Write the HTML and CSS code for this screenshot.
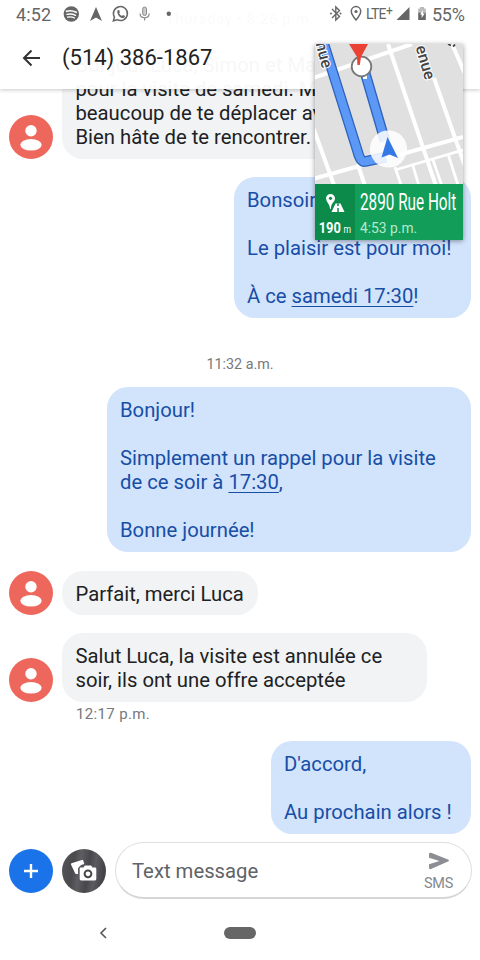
FILE: index.html
```html
<!DOCTYPE html>
<html lang="fr">
<head>
<meta charset="utf-8">
<title>Messages</title>
<link rel="stylesheet" href="styles.css">
</head>
<body>
<svg class="defs" width="0" height="0">
  <symbol id="person" viewBox="0 0 44 44">
    <circle cx="22" cy="22" r="22" fill="#ee675c"/>
    <circle cx="22" cy="15.8" r="5.7" fill="#fff"/>
    <ellipse cx="22" cy="29.8" rx="10.7" ry="5.8" fill="#fff"/>
  </symbol>
</svg>
<div class="screen">
  <header class="top">
    <div class="status">
      <span class="clock">4:52</span>
      <svg class="status-left" width="112" height="28" viewBox="60 0 112 28">
        <circle cx="71.300" cy="14" r="7.700" fill="#666"/>
        <g fill="none" stroke="#fff" stroke-linecap="round"><path stroke-width="1.700" d="M66.500 11.300q5-1.500 9.700 1"/><path stroke-width="1.400" d="M67 14.400q4.500-1.200 8.500.9"/><path stroke-width="1.200" d="M67.500 17.200q4-.9 7 .8"/></g>
        <path d="M96 7l6 14-6-3.400L90 21z" fill="#666"/>
        <path d="M113.400 20.800l1-3.700a7 7 0 1 1 2.700 2.600z" fill="none" stroke="#666" stroke-width="1.500"/>
        <path d="M117.500 10.200l1.600-.2.800 2.200-.8 1q1 2 2.900 2.700l1-1 2 1q0 2-2 2.200c-3 0-6.500-4-5.500-7.900z" fill="#666"/>
        <rect x="142.700" y="7" width="3.800" height="8.500" rx="1.900" fill="#ccc" stroke="#888"/>
        <path d="M140 13.500q.3 4.300 4.600 4.300t4.600-4.300M144.600 17.800v2.700" fill="none" stroke="#888" stroke-width="1.200"/>
        <circle cx="168.800" cy="13.700" r="2.200" fill="#666"/>
      </svg>
      <svg class="status-mid" width="36" height="28" viewBox="328 0 36 28">
        <path d="M332 9l7.500 7.500-3.700 3.500V7l3.700 3.500L332 18" fill="none" stroke="#666" stroke-width="1.400"/>
        <circle cx="331" cy="13.500" r="1" fill="#666"/><circle cx="340.500" cy="13.500" r="1" fill="#666"/>
        <path d="M356 20q-4.700-5.400-4.700-8.700a4.700 4.700 0 0 1 9.400 0q0 3.300-4.700 8.700z" fill="none" stroke="#666" stroke-width="1.500"/>
        <circle cx="356" cy="11.500" r="1.600" fill="#666"/>
      </svg>
      <span class="lte">LTE<sup>+</sup></span>
      <svg class="status-right" width="34" height="28" viewBox="394 0 34 28">
        <path d="M409.500 7v13h-13z" fill="#666"/>
        <path d="M420 7h4v1.500h1.800v4H418.200v-4H420z" fill="#bbb"/>
        <path d="M418.200 12.500h7.600V20h-7.600z" fill="#666"/>
        <path d="M423 10l-3 4.400h1.700V18l3-4.500H423z" fill="#fff"/>
      </svg>
      <span class="battery">55%</span>
    </div>
    <div class="bar">
      <svg width="20" height="20" viewBox="0 0 20 20"><path d="M18 10H3M9.500 2.500L2 10l7.500 7.500" fill="none" stroke="#333" stroke-width="2"/></svg>
      <h1>(514) 386-1867</h1>
    </div>
  </header>

  <main class="thread">
    <div class="day">Thursday • 8:26 p.m.</div>
    <div class="row first">
      <svg class="avatar"><use href="#person"/></svg>
      <p class="bubble in long">Bonjour Luca, Simon et Marie<br>pour la visite de samedi. Merci<br>beaucoup de te déplacer avec<br>Bien hâte de te rencontrer.</p>
    </div>
    <div class="row out-row gap-a"><p class="bubble out w237">Bonsoir,<br><br>Le plaisir est pour moi!<br><br>À ce <u>samedi 17:30</u>!</p></div>
    <div class="stamp">11:32 a.m.</div>
    <div class="row out-row"><p class="bubble out w364">Bonjour!<br><br>Simplement un rappel pour la visite<br>de ce soir à <u>17:30</u>,<br><br>Bonne journée!</p></div>
    <div class="row gap-b">
      <svg class="avatar"><use href="#person"/></svg>
      <p class="bubble in single">Parfait, merci Luca</p>
    </div>
    <div class="row gap-c">
      <svg class="avatar"><use href="#person"/></svg>
      <p class="bubble in long last">Salut Luca, la visite est annulée ce<br>soir, ils ont une offre acceptée</p>
    </div>
    <div class="sent">12:17 p.m.</div>
    <div class="row out-row"><p class="bubble out w200">D'accord,<br><br>Au prochain alors !</p></div>
  </main>

  <footer>
    <div class="compose">
      <svg width="44" height="44" viewBox="0 0 44 44"><circle cx="22" cy="22" r="22" fill="#1a73e8"/><path d="M22 15v14M15 22h14" stroke="#fff" stroke-width="2.400"/></svg>
      <svg class="camera" width="44" height="44" viewBox="0 0 44 44">
        <defs><linearGradient id="photo" x2="1" y2=".15"><stop offset="0" stop-color="#55555a"/><stop offset=".3" stop-color="#4a4a4d"/><stop offset=".45" stop-color="#5e5e62"/><stop offset=".65" stop-color="#48484c"/><stop offset=".8" stop-color="#5b5b60"/><stop offset="1" stop-color="#444448"/></linearGradient></defs>
        <circle cx="22" cy="22" r="22" fill="url(#photo)"/>
        <path d="M9.500 14.300L20 10.900q1-.2 1.300.8l1 3.300-3.300 1-2 2-1 1.500v5.500h-1.500q-1 .2-1.400-.8L9 15.500q-.2-1 .5-1.200z" fill="#fff"/>
        <path d="M19 18.500h2.500l1.300-2h6.400l1.300 2H33q1.300 0 1.300 1.300v10.300q0 1.300-1.300 1.300H19q-1.300 0-1.300-1.300V19.800q0-1.300 1.300-1.300z" fill="#fff"/>
        <circle cx="26" cy="24.800" r="3.400" fill="none" stroke="#48484b" stroke-width="2"/>
      </svg>
      <div class="field">
        <span>Text message</span>
        <div class="send">
          <svg width="22" height="18" viewBox="0 0 22 18"><path d="M1 2.200Q1 .2 3 .8l17 6.700q2 1 0 2L3 17q-2 .6-2-1.400V12.300l10.500-3.300L1 5.700z" fill="#8b8f93"/></svg>
          <span>SMS</span>
        </div>
      </div>
    </div>
    <nav>
      <svg width="10" height="14" viewBox="0 0 10 14"><path d="M7 2L2 7l5 5" fill="none" stroke="#555" stroke-width="1.600"/></svg>
      <i class="pill"></i>
    </nav>
  </footer>

  <aside class="pip">
    <svg width="148" height="140" viewBox="315 44 148 140">
      <path fill="#e0e0e0" d="M315 44h148v140H315z"/>
      <g fill="none" stroke="#fff" stroke-width="4">
        <path d="M313 78L412 44M388 44l48 142M434 78l38 108M452 44l14 32M313 127l21 58M313 179l150-42M358 165l7 21"/>
        <path stroke-width="2.800" d="M395 170l68-20M395 167l6 18M413 166l6 20M433 160l9 26M448 154l10 31"/>
      </g>
      <g fill="none" stroke-linejoin="round">
        <path d="M322 38L357.500 151q3 12 8 10.500L386 157M364 69l21 72" stroke="#2d62bd" stroke-width="10.600"/>
        <path d="M322 38L357.500 151q3 12 8 10.500L386 157M364 69l21 72" stroke="#5c98f5" stroke-width="8"/>
      </g>
      <g class="street"><text transform="translate(315.500 43.500) rotate(75)">nue</text><text transform="translate(415.500 47) rotate(74)">enue</text></g>
      <path d="M448 44l3 1.500M453 46.500l2-2" stroke="#444" stroke-width="1.800"/>
      <path fill="#fff" d="M363 75h4v4h-4z"/>
      <circle cx="361.500" cy="66.500" r="9.800" fill="#fff" stroke="#777" stroke-width="1.800"/>
      <path d="M349 44h19l-7 13-1.200 8h-2.400L357 57z" fill="#ea4335"/>
      <circle cx="388.500" cy="149" r="18.600" fill="#fff" fill-opacity=".86"/>
      <path d="M387.500 137l10.500 21-8.500-3.500-8 3z" fill="#3478e5"/>
    </svg>
    <div class="directions">
      <div class="distance">
        <svg width="20" height="20" viewBox="0 0 20 20"><path d="M5.500 1A4.500 4.500 0 0 1 10 5.500q0 2-3 5.500-1 2-1.200 5h-.7q-.2-3-1.600-5Q1 7.500 1 5.500A4.500 4.500 0 0 1 5.500 1z" fill="#fff"/><circle cx="5.500" cy="5.300" r="1.600" fill="#0b8a4a"/><path d="M10.500 10.500h5L19.500 19H6.500z" fill="#fff"/><path d="M13 10.500V13M13 15v4" stroke="#0b8a4a" stroke-width="1.500"/></svg>
        <div class="metres"><b>190</b><small>m</small></div>
      </div>
      <div class="place"><span class="street-name">2890 Rue Holt</span><span class="eta">4:53 p.m.</span></div>
    </div>
  </aside>
</div>
</body>
</html>
```
FILE: styles.css
```css
* { box-sizing: border-box; }
body { margin: 0; background: #fff; font-family: Roboto, sans-serif; }
p, h1 { margin: 0; font-weight: 400; }
svg { display: block; flex: none; }
.defs { position: absolute; }
.screen { position: relative; width: 480px; height: 960px; overflow: hidden; display: flex; flex-direction: column; }

.top { position: absolute; z-index: 2; top: 0; left: 0; width: 480px; height: 89px; background: rgba(255,255,255,.965); box-shadow: 0 1px 4px rgba(0,0,0,.22); }
.status { height: 28px; display: flex; align-items: center; color: #666; padding-left: 16px; white-space: nowrap; }
.clock { width: 44px; font-size: 18px; letter-spacing: .1px; }
.status-mid { margin-left: 156px; }
.lte { width: 30px; margin-left: 2px; font-size: 14px; line-height: 28px; letter-spacing: -.7px; }
.lte sup { font-size: 12px; line-height: 0; vertical-align: 4px; }
.battery { margin-left: 4px; font-size: 18px; letter-spacing: -.3px; }
.status-right { margin-left: -2px; }
.bar { height: 60px; padding-left: 22px; display: flex; align-items: center; gap: 20px; }
h1 { font-size: 22px; line-height: 26px; color: #222; }

.thread { height: 834px; display: flex; flex-direction: column; padding: 8px 9px 0; }
.day { height: 22px; line-height: 22px; text-align: center; font-size: 15px; letter-spacing: .6px; color: #777; }
.row { display: flex; align-items: flex-end; gap: 9px; }
.first { margin-top: 13px; }
.avatar { width: 44px; height: 44px; }
.bubble { padding: 11px 13px 10px; border-radius: 21px; font-size: 20.250px; line-height: 24px; white-space: nowrap; }
.in { background: #f1f3f4; color: #202124; padding: 10px 13.500px; }
.out { background: #d2e3fc; color: #174ea6; }
.out-row { justify-content: flex-end; }
.gap-a { margin-top: 18px; }
.gap-b { margin-top: 19px; }
.gap-c { margin-top: 18px; }
.single { width: 196px; padding: 11px 13.500px 9px; }
.last { padding-top: 11px; }
.w237 { width: 237px; }
.w364 { width: 364px; }
.w200 { width: 200px; }
.long { width: 365px; }
u { text-decoration-thickness: 1px; text-underline-offset: 3px; }
.stamp { height: 69px; padding-top: 36px; line-height: 20px; text-align: center; font-size: 14.300px; color: #75787c; }
.sent { height: 39px; padding: 2px 0 0 67px; font-size: 15px; line-height: 20px; color: #75787c; letter-spacing: .35px; }

footer { flex: 1; display: flex; flex-direction: column; }
.compose { display: flex; align-items: center; padding: 8px 8px 0 9px; }
.camera { margin-left: 9px; }
.field { margin-left: 9px; flex: 1; height: 57px; border: 1.500px solid #dfdfdf; border-bottom: 2px solid #d6d6d6; border-radius: 29px; display: flex; align-items: center; justify-content: space-between; padding: 2px 18px 0 16px; font-size: 20.300px; color: #606367; }
.send { display: flex; flex-direction: column; align-items: center; gap: 5px; padding-top: 3px; font-size: 14.500px; line-height: 18px; color: #85898d; letter-spacing: -.3px; }
nav { display: flex; align-items: center; padding: 27px 0 0 99px; }
.pill { width: 32px; height: 12px; border-radius: 6px; background: #666; margin-left: 115px; }

.pip { position: absolute; z-index: 3; left: 315px; top: 44px; width: 147.500px; height: 196px; overflow: hidden; box-shadow: 0 1px 5px rgba(0,0,0,.4); }
.street { font-family: Roboto, sans-serif; font-size: 16px; font-weight: 500; fill: #444; stroke: #fff; stroke-width: 2px; paint-order: stroke; }
.directions { height: 56px; display: flex; background: #129d58; color: #fff; white-space: nowrap; }
.distance { width: 40px; background: #0b8a4a; padding-top: 9px; display: flex; flex-direction: column; align-items: center; gap: 6px; font-size: 15px; line-height: 18px; }
.metres { transform: scaleX(.86); }
.distance small { font-size: 10px; margin-left: 3px; }
.place { display: flex; flex-direction: column; padding-left: 5px; }
.street-name { font-size: 23px; line-height: 24px; margin-top: 7px; transform: scaleX(.665); transform-origin: left; width: 100px; }
.eta { font-size: 15px; line-height: 18px; margin-top: 4px; color: #b9e8ce; transform: scaleX(.92); transform-origin: left; }
```
